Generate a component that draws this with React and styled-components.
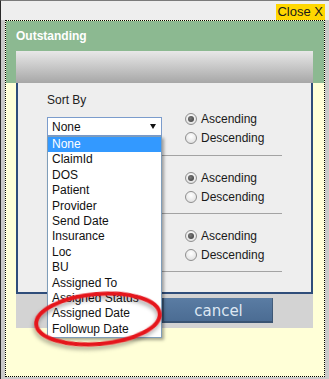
import React from "react";
import styled, { createGlobalStyle } from "styled-components";

const GlobalStyle = createGlobalStyle`
  html, body { margin: 0; padding: 0; }
  body { font-family: "Liberation Sans", Arial, sans-serif; background: #c8c8c8; }
  * { box-sizing: border-box; }
`;

const Window = styled.div`
  position: relative;
  width: 329px;
  height: 379px;
  border-top: 1px solid #7a7a7a;
  border-left: 1px solid #2a2a2a;
  display: flex;
  flex-direction: column;
  background: #eeeeee;
  overflow: hidden;
`;

const TopBar = styled.div`
  height: 19px;
  flex-shrink: 0;
  display: flex;
  justify-content: flex-end;
  align-items: flex-end;
  padding-right: 4px;
  background: #eeeeee;
`;

const CloseButton = styled.span`
  background: #ffd700;
  color: #1a1a1a;
  font-size: 13px;
  line-height: 16px;
  height: 16px;
  padding: 0 2px 0 1px;
  cursor: pointer;
`;

const Stage = styled.div`
  flex: 1;
  display: flex;
  padding: 0 4px 2px 4px;
  background: #c9c9c9;
`;

const DottedBox = styled.div`
  flex: 1;
  border: 1px dotted #000;
  background: #ffffd7;
  display: flex;
  flex-direction: column;
`;

const Header = styled.div`
  background: #8cb991;
  padding: 8px 11px 0 10px;
`;

const Title = styled.h1`
  margin: 0;
  color: #fff;
  font-size: 12px;
  font-weight: bold;
  line-height: 14px;
`;

const GradBar = styled.div`
  margin-top: 8px;
  height: 32px;
  background: linear-gradient(#e8e8e8, #a7a7a7);
`;

const Panel = styled.div`
  margin: 0 11px 0 10px;
  background: #eeeeee;
  border: 2px solid #2f4d7a;
  border-top: none;
  padding: 10px 0 20px 29px;
`;

const Row = styled.div`
  display: grid;
  grid-template-columns: 115px 97px;
  column-gap: 23px;
  width: 235px;
  border-bottom: 1px solid #a3a3a3;
  padding: ${(p) => (p.$first ? "0 0 8px" : "12px 0 7px")};
`;

const LeftCol = styled.div`
  display: flex;
  flex-direction: column;
`;

const Label = styled.div`
  font-size: 12px;
  line-height: 14px;
  color: #222;
  margin-bottom: 10px;
`;

const SelectWrap = styled.div`
  position: relative;
  width: 115px;
`;

const SelectBox = styled.div`
  width: 115px;
  height: 19px;
  border: 1px solid #7b9ccc;
  background: #fff;
  display: flex;
  align-items: center;
  justify-content: space-between;
  padding: 0 5px 0 4px;
  font-size: 12px;
  color: #111;
`;

const Arrow = styled.span`
  width: 0;
  height: 0;
  border-left: 3.5px solid transparent;
  border-right: 3.5px solid transparent;
  border-top: 5px solid #111;
`;

const OptionList = styled.ul`
  position: absolute;
  top: 19px;
  left: 0;
  width: 115px;
  margin: 0;
  padding: 0;
  list-style: none;
  border: 1px solid #7f9db9;
  background: #fff;
  z-index: 5;
  box-shadow: 2px 2px 3px rgba(0, 0, 0, 0.35);
`;

const Option = styled.li`
  line-height: 15.4px;
  padding-left: 4px;
  font-size: 12px;
  white-space: nowrap;
  overflow: hidden;
  color: ${(p) => (p.$selected ? "#fff" : "#111")};
  background: ${(p) => (p.$selected ? "#3399ff" : "transparent")};
`;

const RadioGroup = styled.div`
  display: flex;
  flex-direction: column;
  margin-top: ${(p) => (p.$first ? "16px" : "0")};
`;

const RadioLine = styled.label`
  display: flex;
  align-items: center;
  gap: 4px;
  height: 19px;
  font-size: 12px;
  color: #1a1a1a;
`;

const Radio = styled.span`
  position: relative;
  width: 12px;
  height: 12px;
  border-radius: 50%;
  border: 1px solid #8f8f8f;
  background: radial-gradient(circle at 50% 35%, #ffffff, #dadada);
  &::after {
    content: "";
    display: ${(p) => (p.$checked ? "block" : "none")};
    position: absolute;
    left: 2px;
    top: 2px;
    width: 6px;
    height: 6px;
    border-radius: 50%;
    background: radial-gradient(circle at 40% 40%, #7a7a7a, #3a3a3a);
  }
`;

const Footer = styled.div`
  margin: 0 11px 0 10px;
  height: 34px;
  background: #d3d3d3;
  display: flex;
  align-items: flex-start;
  padding: 4px 0 0 146px;
`;

const Button = styled.button`
  width: 111px;
  height: 25px;
  border: none;
  border-left: 2px solid #3b5778;
  padding: 1px 0 0;
  background: linear-gradient(#5a7ca3, #4a6b92);
  box-shadow: inset -1px -2px 0 rgba(0, 0, 0, 0.22);
  color: #dde7f3;
  font-family: "DejaVu Sans", Verdana, sans-serif;
  font-size: 15px;
  line-height: 24px;
  cursor: pointer;
`;

const Annotation = styled.svg`
  position: absolute;
  left: -1px;
  top: -1px;
  width: 329px;
  height: 379px;
  pointer-events: none;
  z-index: 10;
`;

const options = [
  "None",
  "ClaimId",
  "DOS",
  "Patient",
  "Provider",
  "Send Date",
  "Insurance",
  "Loc",
  "BU",
  "Assigned To",
  "Assigned Status",
  "Assigned Date",
  "Followup Date",
];

function Radios({ first }) {
  return (
    <RadioGroup $first={first}>
      <RadioLine>
        <Radio $checked />
        Ascending
      </RadioLine>
      <RadioLine>
        <Radio />
        Descending
      </RadioLine>
    </RadioGroup>
  );
}

export default function App() {
  return (
    <>
      <GlobalStyle />
      <Window>
        <TopBar>
          <CloseButton>Close X</CloseButton>
        </TopBar>
        <Stage>
          <DottedBox>
            <Header>
              <Title>Outstanding</Title>
              <GradBar />
            </Header>
            <Panel>
              <Row $first>
                <LeftCol>
                  <Label>Sort By</Label>
                  <SelectWrap>
                    <SelectBox>
                      None
                      <Arrow />
                    </SelectBox>
                    <OptionList>
                      {options.map((o, i) => (
                        <Option key={o} $selected={i === 0}>
                          {o}
                        </Option>
                      ))}
                    </OptionList>
                  </SelectWrap>
                </LeftCol>
                <Radios first />
              </Row>
              <Row>
                <LeftCol />
                <Radios />
              </Row>
              <Row>
                <LeftCol />
                <Radios />
              </Row>
            </Panel>
            <Footer>
              <Button>cancel</Button>
            </Footer>
          </DottedBox>
        </Stage>
        <Annotation viewBox="0 0 329 379">
          <defs>
            <filter id="redShadow" x="-20%" y="-30%" width="140%" height="170%">
              <feDropShadow dx="-1" dy="3" stdDeviation="2" floodColor="#000" floodOpacity="0.35" />
            </filter>
          </defs>
          <ellipse
            cx="98"
            cy="319"
            rx="62"
            ry="25"
            transform="rotate(-5 98 319)"
            fill="none"
            stroke="#e5161d"
            strokeWidth="4"
            filter="url(#redShadow)"
          />
        </Annotation>
      </Window>
    </>
  );
}
